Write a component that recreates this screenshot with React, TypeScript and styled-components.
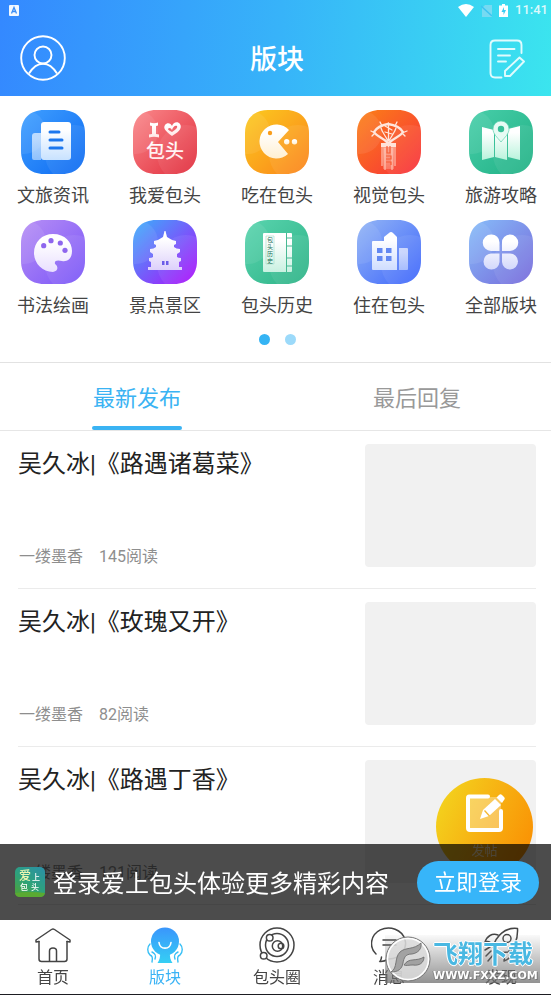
import React from 'react';
import styled, { createGlobalStyle } from 'styled-components';

const GlobalStyle = createGlobalStyle`
  *, *::before, *::after { box-sizing: border-box; }
  html { overflow-x: hidden; }
  body {
    margin: 0;
    overflow-x: hidden;
    background: #fff;
    color: #222;
    font-family: Roboto, "Noto Sans CJK SC", sans-serif;
  }
  button { border: 0; padding: 0; background: none; color: inherit; font: inherit; cursor: pointer; }
  a { color: inherit; text-decoration: none; }
  h1, h2, p, ul { margin: 0; padding: 0; }
  ul { list-style: none; }
  svg { display: block; }
`;

const Page = styled.div`
  margin: 0 -6px 0 -3px;
  padding-bottom: 76px;
`;

const Header = styled.header`
  height: 96px;
  background: linear-gradient(96deg, #3488ff 0%, #37b3f9 50%, #3be6ee 100%);
  color: #fff;
`;

const StatusBar = styled.div`
  display: flex;
  align-items: center;
  height: 20px;
  padding: 0 9px 0 12px;
`;

const StatusIcons = styled.div`
  display: flex;
  align-items: center;
  gap: 7px;
  margin-left: auto;
`;

const Clock = styled.span`
  font-size: 13px;
  line-height: 20px;
  font-weight: 500;
  color: #dcf9fc;
`;

const TitleBar = styled.div`
  display: grid;
  grid-template-columns: 48px 1fr 48px;
  align-items: center;
  height: 76px;
  padding: 0 23px;
`;

const Title = styled.h1`
  font-size: 27px;
  line-height: 40px;
  font-weight: 500;
  padding-top: 4px;
  text-align: center;
`;

const IconButton = styled.button<{ $end?: boolean }>`
  display: flex;
  justify-content: ${p => (p.$end ? 'flex-end' : 'flex-start')};
  padding: ${p => (p.$end ? '2px 8px 0 0' : '0')};
`;

const Boards = styled.section`
  padding: 14px 0 17px;
  border-bottom: 1px solid #e2e2e2;
`;

const BoardGrid = styled.ul`
  display: grid;
  grid-template-columns: repeat(5, 1fr);
  row-gap: 10px;
`;

const BoardLink = styled.a`
  display: flex;
  flex-direction: column;
  align-items: center;
  gap: 8px;
  font-size: 18px;
  line-height: 28px;
  color: #444;
  white-space: nowrap;
`;

const Dots = styled.div`
  display: flex;
  justify-content: center;
  gap: 15px;
  margin-top: 14px;
`;

const Dot = styled.span<{ $active?: boolean }>`
  width: 11px;
  height: 11px;
  border-radius: 50%;
  background: ${p => (p.$active ? '#35b4f4' : '#9cdafa')};
`;

const Tabs = styled.div`
  display: grid;
  grid-template-columns: 1fr 1fr;
  border-bottom: 1px solid #e6e6e6;
`;

const Tab = styled.button<{ $active?: boolean }>`
  justify-self: center;
  display: flex;
  flex-direction: column;
  align-items: center;
  width: 90px;
  height: 67px;
  padding-top: 18px;
  font-size: 22px;
  line-height: 36px;
  white-space: nowrap;
  color: ${p => (p.$active ? '#3ab3f3' : '#999')};

  &::after {
    content: '';
    width: 100%;
    height: 4px;
    margin-top: auto;
    border-radius: 2px;
    background: ${p => (p.$active ? '#3ab3f3' : 'transparent')};
  }
`;

const PostList = styled.ul`
  padding: 0 21px;
`;

const PostItem = styled.li`
  border-bottom: 1px solid #ebebeb;
`;

const PostLink = styled.a`
  display: flex;
  gap: 16px;
  padding: 13px 0 21px;
`;

const PostText = styled.div`
  display: flex;
  flex: 1;
  flex-direction: column;
  justify-content: space-between;
`;

const PostTitle = styled.h2`
  font-size: 24px;
  line-height: 40px;
  font-weight: 400;
  color: #222;
`;

const PostMeta = styled.p`
  display: flex;
  gap: 16px;
  padding-left: 1px;
  font-size: 16px;
  line-height: 20px;
  color: #8e8e8e;
`;

const Thumb = styled.div`
  width: 33%;
  height: 123px;
  border-radius: 4px;
  background: #f1f1f1;
`;

const Dock = styled.div`
  position: fixed;
  right: -6px;
  bottom: 0;
  left: -3px;
`;

const ComposeButton = styled.button`
  position: absolute;
  right: 24px;
  bottom: 120px;
  display: flex;
  flex-direction: column;
  align-items: center;
  gap: 8px;
  width: 97px;
  height: 97px;
  padding-top: 14px;
  border-radius: 50%;
  background: linear-gradient(115deg, #f3d51e 5%, #f7b012 50%, #fa8e02 95%);
  color: #fff;
  font-size: 13px;
  line-height: 20px;
`;

const ComposeLabel = styled.span`
  opacity: 0.7;
`;

const LoginBar = styled.aside`
  position: relative;
  display: flex;
  align-items: center;
  gap: 8px;
  height: 76px;
  padding: 0 18px;
  background: rgba(0, 0, 0, 0.7);
  color: #fff;
`;

const LoginText = styled.p`
  flex: 1;
  padding-top: 3px;
  font-size: 24px;
  line-height: 36px;
  white-space: nowrap;
`;

const LoginButton = styled.button`
  width: 122px;
  height: 43px;
  border-radius: 22px;
  background: #37b5f9;
  font-size: 22px;
  line-height: 43px;
  white-space: nowrap;
`;

const BottomNav = styled.nav`
  position: relative;
  display: grid;
  grid-template-columns: repeat(5, 1fr);
  height: 75px;
  background: #fff;
  border-bottom: 1px solid #1d1d22;
`;

const NavLink = styled.a<{ $active?: boolean }>`
  display: flex;
  flex-direction: column;
  align-items: center;
  gap: 3px;
  padding-top: 7px;
  font-size: 16px;
  line-height: 24px;
  color: ${p => (p.$active ? '#3ab3f5' : '#444')};
`;

const Watermark = styled.div`
  position: absolute;
  right: 17px;
  bottom: 11px;
  display: flex;
  align-items: flex-end;
  gap: 2px;
  width: 155px;
  height: 48px;
  background: linear-gradient(to bottom, rgba(150, 150, 150, 0.05), rgba(110, 110, 110, 0.75));
  pointer-events: none;
`;

const WatermarkText = styled.div`
  display: flex;
  flex-direction: column;
  white-space: nowrap;
`;

const WatermarkName = styled.span`
  font-size: 25px;
  line-height: 28px;
  font-weight: 700;
  color: #49b8e2;
  text-shadow: 1px 0 #fff, -1px 0 #fff, 0 1px #fff, 0 -1px #fff;
`;

const WatermarkSite = styled.span`
  font-family: "DejaVu Sans", sans-serif;
  font-size: 11px;
  line-height: 14px;
  font-weight: 700;
  color: #fff;
  text-shadow: 1px 1px #777, -1px 0 #888;
`;

type TileProps = { id: string; from: string; to: string; glyph?: string; children: React.ReactNode };

function Tile({ id, from, to, glyph = '#fff', children }: TileProps) {
  return (
    <svg width="64" height="64" viewBox="0 0 64 64" aria-hidden="true">
      <defs>
        <linearGradient id={`${id}-bg`} x1="0" y1="0" x2="1" y2="1">
          <stop offset="0.05" stopColor={from} />
          <stop offset="0.95" stopColor={to} />
        </linearGradient>
        <linearGradient id={`${id}-fg`} x1="0" y1="0" x2="0" y2="1">
          <stop offset="0.2" stopColor="#fff" />
          <stop offset="1" stopColor={glyph} />
        </linearGradient>
        <clipPath id={`${id}-clip`}>
          <path d="M23 0H41C55 0 64 9 64 23V41C64 55 55 64 41 64H23C9 64 0 55 0 41V23C0 9 9 0 23 0Z" />
        </clipPath>
      </defs>
      <g clipPath={`url(#${id}-clip)`}>
        <rect width="64" height="64" fill={`url(#${id}-bg)`} />
        <circle cx="3" cy="22" r="22" fill="#fff" opacity="0.08" />
        <circle cx="53" cy="44" r="29" fill="#fff" opacity="0.07" />
      </g>
      <g fill={`url(#${id}-fg)`}>{children}</g>
    </svg>
  );
}

const NewsIcon = () => (
  <Tile id="news" from="#3d9dff" to="#0f6cf2" glyph="#c8e2ff">
    <path d="M20 23H14a3 3 0 0 0-3 3V48a2 2 0 0 0 2 2H20Z" opacity="0.65" />
    <rect x="20" y="12" width="30" height="38" rx="3" />
    <path d="M29 22H38M29 30H41M29 38H41" stroke="#1c77ee" strokeWidth="3" strokeLinecap="round" />
  </Tile>
);

const LoveIcon = () => (
  <Tile id="love" from="#f98487" to="#e2303f" glyph="#ffe6e6">
    <path d="M17 12.500Q21 14 25 12.500V15.500L23 16V24L26 24.500V27.500Q21 26 16 27.500V24.500L19 24V16L17 15.500Z" />
    <path d="M39 26C32 21 30 18 32 15c2-3 6-2 7 1 1-4 6-5 8-2 3 5-3 9-8 12Zm0-4c3-2 6-4 5-6-2-1-4 1-5 4-1-2-3-3-4-1 0 1 2 2 4 3Z" fillRule="evenodd" />
    <text x="32" y="48" fontSize="19" fontWeight="500" textAnchor="middle" fontFamily='"Noto Sans CJK SC", sans-serif'>包头</text>
  </Tile>
);

const EatIcon = () => (
  <Tile id="eat" from="#fbc71f" to="#fb861a" glyph="#fff0d2">
    <path d="M44 20A17 17 0 1 0 43 44L33 32Z" />
    <circle cx="25" cy="23" r="2.200" fill="#f99d1b" />
    <circle cx="41.700" cy="31.700" r="2.700" />
    <circle cx="49.500" cy="31.700" r="2.700" />
  </Tile>
);

const ViewIcon = () => (
  <Tile id="view" from="#fb7d18" to="#f8333a" glyph="#ffb09a">
    <g fill="none" stroke="#ffe6dc" strokeLinecap="round" strokeLinejoin="round">
      <path d="M31 33C27 28 20 27 17 22C20 17 25 15 31 14C38 15 43 17 46 22C43 27 36 28 32 33" strokeWidth="2.400" />
      <path d="M31 31C28 25 25 22 24 18M32 31C35 25 38 22 39 18M31.500 30V13M23 12L25 16M40 12L38 16M14 21L18 23L15 26M50 21L45 23L48 26M28 16L35 20M28 22L35 24" strokeWidth="1.300" />
    </g>
    <path d="M24 33H39V37H24Z" fill="#ffe3d9" />
    <path d="M26 37H37V59H26Z" opacity="0.4" />
    <path d="M25 37V56M28 38V60M35 38V60M38 37V56" stroke="#ffd0c3" strokeWidth="1" />
    <path d="M30 36V43H33V36M29 46H34V49H29M29 52H34V55" stroke="#f75d35" strokeWidth="1.200" fill="none" />
  </Tile>
);

const MapIcon = () => (
  <Tile id="map" from="#46cda8" to="#22b286" glyph="#b9f3dc">
    <path d="M13 17L25 20V47L13 50ZM26 20L38 17V50L26 47ZM39 19L51 16V50L39 47Z" />
    <path d="M32 32C28 27 24 24 24 19a8 8 0 0 1 16 0C40 24 36 27 32 32Z" fill="#e7fbf4" stroke="#5fd0ae" strokeWidth="0.700" />
    <circle cx="32" cy="19" r="3.200" fill="#38bf98" />
  </Tile>
);

const PaletteIcon = () => (
  <Tile id="paint" from="#b48cf5" to="#7d58f8" glyph="#e9dfff">
    <path d="M32 14C44 14 51 22 51 31C51 39 46 42 41 41C37 40 33 40 34 44C37 46 38 51 32 52C21 52 13 43 13 33C13 22 21 14 32 14Z" />
    <g fill="#8e66ee">
      <circle cx="22.700" cy="25.700" r="2.600" />
      <circle cx="30" cy="20.700" r="2.600" />
      <circle cx="39.300" cy="23" r="2.600" />
      <circle cx="44" cy="30.300" r="2.600" />
    </g>
  </Tile>
);

const PagodaIcon = () => (
  <Tile id="pagoda" from="#3fa9fb" to="#a913fa" glyph="#ddd0fb">
    <path d="M31.500 11H32.500L34 17Q38 20 43 21V24L41 25V27Q43 29 47 29V32L44 34V37Q45 38 48 38V41L46 42V47H49V50H15V47H18V42L16 41V38Q19 38 20 37V34L17 32V29Q21 29 23 27V25L21 24V21Q26 20 30 17Z" />
    <path d="M29 41H31.500V45H29ZM33 41H35.500V45H33Z" fill="#6b5ce8" />
  </Tile>
);

const HistoryIcon = () => (
  <Tile id="history" from="#58d3ad" to="#2fb488" glyph="#c9f1e1">
    <rect x="18" y="13" width="29" height="39" rx="1" />
    <path d="M41.500 13V52M41.500 18H47M41.500 26H47M41.500 38H47M41.500 46H47" stroke="#47b993" strokeWidth="1" />
    <path d="M21 16H29V44H21Z" fill="none" stroke="#9fdcc6" strokeWidth="0.600" />
    <g fill="#197158" fontSize="6" textAnchor="middle" fontFamily='"Noto Sans CJK SC", sans-serif'>
      <text x="25" y="22">包</text>
      <text x="25" y="29">头</text>
      <text x="25" y="36">历</text>
      <text x="25" y="43">史</text>
    </g>
  </Tile>
);

const LivingIcon = () => (
  <Tile id="living" from="#8fb2f6" to="#4169fb" glyph="#cfddff">
    <path d="M15 22Q15 21 16 21H27V17L32 13Q34 11 36 13L40 17V50H16Q15 50 15 49Z" />
    <path d="M42 28H50Q51 28 51 29V49Q51 50 50 50H42Z" opacity="0.65" />
    <path d="M20 28H25.500V33H20ZM29 28H34.500V33H29ZM20 36H25.500V41H20ZM29 36H34.500V41H29Z" fill="#6288f2" />
  </Tile>
);

const AllIcon = () => (
  <Tile id="all" from="#86b9f8" to="#776ddc" glyph="#d3d8fb">
    <path d="M22 14.500A8 8 0 0 1 30.500 23V31H22A8 8 0 0 1 22 14.500ZM41 14.500A8 8 0 0 1 41 31H33V23A8 8 0 0 1 41 14.500ZM22 33.500H30.500V42A8 8 0 1 1 22 33.500ZM33 33.500H41A8 8 0 1 1 33 42Z" />
  </Tile>
);

const UserIcon = () => (
  <svg width="46" height="46" viewBox="0 0 46 46" fill="none" stroke="#fff" strokeWidth="1.900" aria-hidden="true">
    <circle cx="23" cy="23" r="21.800" />
    <circle cx="23" cy="20" r="8.500" />
    <path d="M9 38.500C13 32 17 28.700 23 28.700S33 32 37 38.500" />
  </svg>
);

const NoteIcon = () => (
  <svg width="37" height="40" viewBox="0 0 37 40" fill="none" stroke="#e0fbfd" strokeWidth="1.900" strokeLinecap="round" strokeLinejoin="round" aria-hidden="true">
    <path d="M32.500 14V6Q32.500 1.500 28 1.500H6Q1.500 1.500 1.500 6V34Q1.500 38.500 6 38.500H12.500" />
    <path d="M9 10H25.500M9 16.500H21M9 22.500H17" />
    <path d="M16 37V32L30.500 18.500L35 22.500L21 37Z" />
  </svg>
);

const HomeIcon = () => (
  <svg width="36" height="36" viewBox="0 0 36 36" fill="none" stroke="#444" strokeWidth="1.500" strokeLinecap="round" strokeLinejoin="round" aria-hidden="true">
    <path d="M4 14.500L1 15V13L16.500 2.500Q18 1.500 19.500 2.500L35 13V15L32 14.500" />
    <path d="M4 14.500V32Q4 34.500 6.500 34.500H29.500Q32 34.500 32 32V14.500" />
    <path d="M14.500 34V24Q14.500 21 18 21T21.500 24V34" />
  </svg>
);

const BoardIcon = () => (
  <svg width="36" height="36" viewBox="0 0 36 36" fill="none" aria-hidden="true">
    <defs>
      <linearGradient id="board-nav" x1="0" y1="0" x2="0" y2="36" gradientUnits="userSpaceOnUse">
        <stop stopColor="#3a95fc" />
        <stop offset="1" stopColor="#35cff4" />
      </linearGradient>
    </defs>
    <circle cx="18" cy="14.500" r="14" fill="url(#board-nav)" />
    <path d="M13 25H23C22.500 30 23.500 33 25.500 36H10.500C12.500 33 13.500 30 13 25Z" fill="url(#board-nav)" />
    <path d="M12 15.500C13 23 23 23 24 15.500" stroke="#fff" strokeWidth="1.600" strokeLinecap="round" />
    <path d="M3 17C0 20 0 25 3 28C5 29 6 30 5 35M33 17C36 20 36 25 33 28C31 29 30 30 31 35M5 25C9 27 9 29 8 32M31 25C27 27 27 29 28 32" stroke="#38c0f6" strokeWidth="1.400" strokeLinecap="round" />
  </svg>
);

const CircleIcon = () => (
  <svg width="36" height="36" viewBox="0 0 36 36" fill="none" stroke="#444" strokeWidth="1.500" aria-hidden="true">
    <circle cx="18" cy="18" r="17" />
    <circle cx="18" cy="18" r="11.500" />
    <circle cx="18.500" cy="19" r="5.200" />
    <circle cx="22" cy="19" r="2.800" />
    <circle cx="10.700" cy="10.700" r="3.300" fill="#fff" />
    <circle cx="4.700" cy="28.700" r="3.300" fill="#fff" />
  </svg>
);

const MessageIcon = () => (
  <svg width="36" height="36" viewBox="0 0 36 36" fill="none" stroke="#444" strokeWidth="1.500" strokeLinecap="round" aria-hidden="true">
    <path d="M5 27A17 15.500 0 1 1 18 32C14 34 12 35 9 34.500C10 33 10.500 32 10.500 30" />
    <path d="M12 13H25M12 18H25" />
  </svg>
);

const RocketIcon = () => (
  <svg width="36" height="36" viewBox="0 0 36 36" fill="none" stroke="#444" strokeWidth="1.500" strokeLinecap="round" strokeLinejoin="round" aria-hidden="true">
    <path d="M34.500 1.500C35 11 33 19 25 25L14 26L10 20C13 9 22 0 34.500 1.500Z" />
    <path d="M15 8C9 6 4 9 2 15C5 14 8 15 10 19M28 22C30 27 27 32 21 34C22 30 20 28 17 26" />
    <circle cx="24" cy="11.500" r="4" />
    <path d="M8 24L3 29M11 27L5 34M7 20L2 23" />
  </svg>
);

const EditIcon = () => (
  <svg width="40" height="41" viewBox="0 0 40 41" fill="none" aria-hidden="true">
    <rect x="3" y="5" width="33" height="33" fill="#fff" opacity="0.32" />
    <path d="M23 4.500H4Q3 4.500 3 6V36Q3 38 5 38H34Q36 38 36 36V19" stroke="#fff" strokeWidth="4" strokeLinecap="round" />
    <path d="M15 27L18 18L30 7L36 13L24 24Z" fill="#fff" />
    <path d="M31.500 5.500L34 3Q35.500 1.500 37 3L39 5Q40.500 6.500 39 8L37 11Z" fill="#fff" />
    <path d="M19.500 18.500L24.500 24" stroke="#f4b831" strokeWidth="1.300" />
  </svg>
);

const AppLogo = () => (
  <svg width="30" height="30" viewBox="0 0 30 30" aria-hidden="true">
    <defs>
      <linearGradient id="logo-bg" x1="1" y1="0" x2="0.300" y2="1">
        <stop stopColor="#2b8fa9" />
        <stop offset="0.600" stopColor="#2da27b" />
        <stop offset="1" stopColor="#48a342" />
      </linearGradient>
    </defs>
    <rect width="30" height="30" rx="5" fill="url(#logo-bg)" />
    <path d="M0 26Q15 24 30 26A5 5 0 0 1 25 30H5A5 5 0 0 1 0 26Z" fill="#5aaa32" />
    <g fontFamily='"Noto Sans CJK SC", sans-serif' fill="#fff" fontWeight="500">
      <text x="4" y="13" fontSize="12" fill="#eaf5b0">爱</text>
      <text x="17" y="13" fontSize="8">上</text>
      <text x="5" y="23" fontSize="8">包</text>
      <text x="16" y="23" fontSize="8">头</text>
    </g>
  </svg>
);

const WatermarkLogo = () => (
  <svg width="46" height="48" viewBox="0 0 46 48" aria-hidden="true">
    <circle cx="23" cy="24" r="22" fill="#dcdcdc" fillOpacity="0.850" stroke="#777" />
    <circle cx="23" cy="24" r="20.500" fill="none" stroke="#fff" strokeWidth="1.500" />
    <path d="M6 37C13 33 9 23 15 17C20 12 29 15 36 8C37 14 33 18 27 19C20 19 19 23 18 28C17 34 13 37 6 37Z" fill="#a2a2a2" stroke="#666" strokeWidth="0.800" />
    <path d="M19 30C24 22 31 27 39 22C39 28 34 31 28 30C24 30 21 31 19 30Z" fill="#a2a2a2" stroke="#666" strokeWidth="0.800" />
  </svg>
);

const boards = [
  { label: '文旅资讯', Icon: NewsIcon },
  { label: '我爱包头', Icon: LoveIcon },
  { label: '吃在包头', Icon: EatIcon },
  { label: '视觉包头', Icon: ViewIcon },
  { label: '旅游攻略', Icon: MapIcon },
  { label: '书法绘画', Icon: PaletteIcon },
  { label: '景点景区', Icon: PagodaIcon },
  { label: '包头历史', Icon: HistoryIcon },
  { label: '住在包头', Icon: LivingIcon },
  { label: '全部版块', Icon: AllIcon },
];

const posts = [
  { title: '吴久冰|《路遇诸葛菜》', author: '一缕墨香', reads: 145 },
  { title: '吴久冰|《玫瑰又开》', author: '一缕墨香', reads: 82 },
  { title: '吴久冰|《路遇丁香》', author: '一缕墨香', reads: 121 },
];

const navItems = [
  { label: '首页', Icon: HomeIcon },
  { label: '版块', Icon: BoardIcon, active: true },
  { label: '包头圈', Icon: CircleIcon },
  { label: '消息', Icon: MessageIcon },
  { label: '发现', Icon: RocketIcon },
];

export default function App() {
  return (
    <>
      <GlobalStyle />
      <Page>
        <Header>
          <StatusBar>
            <svg width="10" height="11" viewBox="0 0 10 11" aria-hidden="true">
              <rect width="10" height="11" rx="1" fill="#f2f8ff" />
              <path d="M2.500 8.500L5 2.500L7.500 8.500M3.500 6.500H6.500" stroke="#3a8df5" strokeWidth="1.300" fill="none" />
            </svg>
            <StatusIcons>
              <svg width="16" height="13" viewBox="0 0 16 13" aria-hidden="true">
                <path d="M0 3Q8 -3 16 3L8 13Z" fill="#fff" />
              </svg>
              <svg width="11" height="13" viewBox="0 0 11 13" aria-hidden="true">
                <path d="M4 1H11V13H1V4Z" fill="#9fdcf4" opacity="0.600" />
                <path d="M0 2L11 12" stroke="#3cc4f2" strokeWidth="1.500" />
              </svg>
              <svg width="9" height="13" viewBox="0 0 9 13" aria-hidden="true">
                <path d="M3 0H6V1.500H9V13H0V1.500H3Z" fill="#fff" />
                <path d="M5 3L2.500 8H4.500V11L7 6H5Z" fill="#3acdf2" />
              </svg>
              <Clock>11:41</Clock>
            </StatusIcons>
          </StatusBar>
          <TitleBar>
            <IconButton type="button" aria-label="个人中心"><UserIcon /></IconButton>
            <Title>版块</Title>
            <IconButton type="button" aria-label="写帖子" $end><NoteIcon /></IconButton>
          </TitleBar>
        </Header>

        <main>
          <Boards>
            <BoardGrid>
              {boards.map(({ label, Icon }) => (
                <li key={label}>
                  <BoardLink href="#board"><Icon />{label}</BoardLink>
                </li>
              ))}
            </BoardGrid>
            <Dots>
              <Dot $active />
              <Dot />
            </Dots>
          </Boards>

          <Tabs role="tablist">
            <Tab type="button" role="tab" aria-selected="true" $active>最新发布</Tab>
            <Tab type="button" role="tab" aria-selected="false">最后回复</Tab>
          </Tabs>

          <PostList>
            {posts.map(post => (
              <PostItem key={post.title}>
                <PostLink href="#post">
                  <PostText>
                    <PostTitle>{post.title}</PostTitle>
                    <PostMeta>
                      <span>{post.author}</span>
                      <span>{post.reads}阅读</span>
                    </PostMeta>
                  </PostText>
                  <Thumb />
                </PostLink>
              </PostItem>
            ))}
          </PostList>
        </main>
      </Page>

      <Dock>
        <ComposeButton type="button"><EditIcon /><ComposeLabel>发帖</ComposeLabel></ComposeButton>
        <LoginBar>
          <AppLogo />
          <LoginText>登录爱上包头体验更多精彩内容</LoginText>
          <LoginButton type="button">立即登录</LoginButton>
        </LoginBar>
        <BottomNav>
          {navItems.map(({ label, Icon, active }) => (
            <NavLink key={label} href="#nav" $active={active}><Icon />{label}</NavLink>
          ))}
          <Watermark>
            <WatermarkLogo />
            <WatermarkText>
              <WatermarkName>飞翔下载</WatermarkName>
              <WatermarkSite>WWW.FXXZ.COM</WatermarkSite>
            </WatermarkText>
          </Watermark>
        </BottomNav>
      </Dock>
    </>
  );
}
